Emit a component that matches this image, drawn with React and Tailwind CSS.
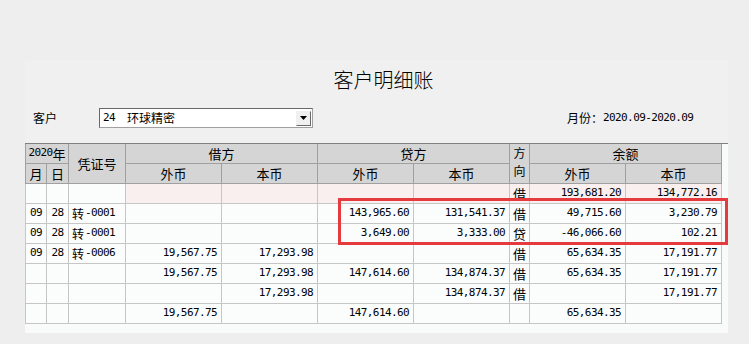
const cjk = "font-['Noto_Sans_CJK_SC',sans-serif]";
const mono = "font-['DejaVu_Sans_Mono','Noto_Sans_CJK_SC',monospace] text-[11px] tracking-[-0.6px]";

const rows = [
  { pink: true, d: ['', '', '', '', '', '', '', '借', '193,681.20', '134,772.16'] },
  { d: ['09', '28', '0001', '', '', '143,965.60', '131,541.37', '借', '49,715.60', '3,230.79'] },
  { d: ['09', '28', '0001', '', '', '3,649.00', '3,333.00', '贷', '-46,066.60', '102.21'] },
  { d: ['09', '28', '0006', '19,567.75', '17,293.98', '', '', '借', '65,634.35', '17,191.77'] },
  { d: ['', '', '', '19,567.75', '17,293.98', '147,614.60', '134,874.37', '借', '65,634.35', '17,191.77'] },
  { d: ['', '', '', '', '17,293.98', '', '134,874.37', '借', '', '17,191.77'] },
  { d: ['', '', '', '19,567.75', '', '147,614.60', '', '', '65,634.35', ''] },
];

const cols = 'grid-cols-[20px_21px_56px_95px_95px_95px_95px_19px_95px_95px]';

const Head = ({ className = '', children }) => (
  <div className={`bg-[#d5d5d5] flex items-center justify-center text-[13px] text-black ${cjk} ${className}`}>
    {children}
  </div>
);

const Cell = ({ i, v, pink }) => {
  const bg = pink && i >= 3 ? 'bg-[#f8efee]' : 'bg-[#fbfcfc]';
  if (i < 2) {
    return <div className={`${bg} flex items-center justify-center ${mono}`}>{v}</div>;
  }
  if (i === 2) {
    return (
      <div className={`${bg} flex items-center pl-[3px] ${mono}`}>
        {v && (
          <>
            <span className={`text-[12px] tracking-normal mr-[1px] ${cjk}`}>转</span>-{v}
          </>
        )}
      </div>
    );
  }
  if (i === 7) {
    return <div className={`${bg} flex items-center justify-center text-[13px] ${cjk}`}>{v}</div>;
  }
  return <div className={`${bg} flex items-center justify-end pr-[4px] ${mono}`}>{v}</div>;
};

export default function App() {
  return (
    <div className="w-[749px] h-[344px] bg-[#eeeeee] pt-[60px] overflow-hidden text-black">
      <div className="ml-[25px] w-[703px] h-[273px] bg-[#f0f0f0] flex flex-col">
        {/* 标题 */}
        <div className={`pt-[6px] pl-[14px] h-[34px] leading-[28px] text-center text-[20px] font-light ${cjk}`}>客户明细账</div>

        {/* 客户 / 月份 */}
        <div className="mt-[14px] h-[20px] flex items-center">
          <span className={`ml-[8px] w-[66px] text-[12px] ${cjk}`}>客户</span>
          <div className="w-[214px] h-[20px] bg-white border border-[#a0a0a0] border-t-[#696969] border-l-[#696969] flex items-center pl-[3px] pr-[1px]">
            <span className={mono}>24</span>
            <span className={`ml-[12px] text-[12px] ${cjk}`}>环球精密</span>
            <div className="ml-auto w-[15px] h-[15px] bg-[#f0f0f0] border border-[#f0f0f0] border-r-[#696969] border-b-[#696969] flex items-center justify-center">
              <svg width="7" height="4" viewBox="0 0 7 4"><path d="M0 0h7L3.5 4z" fill="#000" /></svg>
            </div>
          </div>
          <span className={`ml-[254px] text-[12px] ${cjk}`}>月份：</span>
          <span className={mono}>2020.09-2020.09</span>
        </div>

        {/* 表格 */}
        <div className="relative mt-[15px] w-[703px] h-[190px] bg-[#f9fafa] border-t border-[#808080]">
          <div className={`grid ${cols} grid-rows-[19px_19px] gap-px bg-[#a0a0a0] border-x border-b border-[#a0a0a0] w-[697px]`}>
            <Head className="col-span-2">
              <span className={mono}>2020</span>年
            </Head>
            <Head className="row-span-2">凭证号</Head>
            <Head className="col-span-2">借方</Head>
            <Head className="col-span-2">贷方</Head>
            <Head className="row-span-2 flex-col !justify-start">
              <span className="block text-[12px] leading-[17.5px]">方</span>
              <span className="block text-[12px] leading-[17.5px]">向</span>
            </Head>
            <Head className="col-span-2">余额</Head>
            <Head>月</Head>
            <Head>日</Head>
            <Head>外币</Head>
            <Head>本币</Head>
            <Head>外币</Head>
            <Head>本币</Head>
            <Head>外币</Head>
            <Head>本币</Head>
          </div>
          <div className={`grid ${cols} auto-rows-[19px] gap-px bg-[#c6c6c6] border-x border-b border-[#c6c6c6] w-[697px]`}>
            {rows.map((r, ri) =>
              r.d.map((v, i) => <Cell key={`${ri}-${i}`} i={i} v={v} pink={r.pink} />)
            )}
          </div>
          <div className="absolute left-[313px] top-[54px] w-[390px] h-[47px] border-[3px] border-[#e53a3e]"></div>
        </div>
      </div>
    </div>
  );
}
